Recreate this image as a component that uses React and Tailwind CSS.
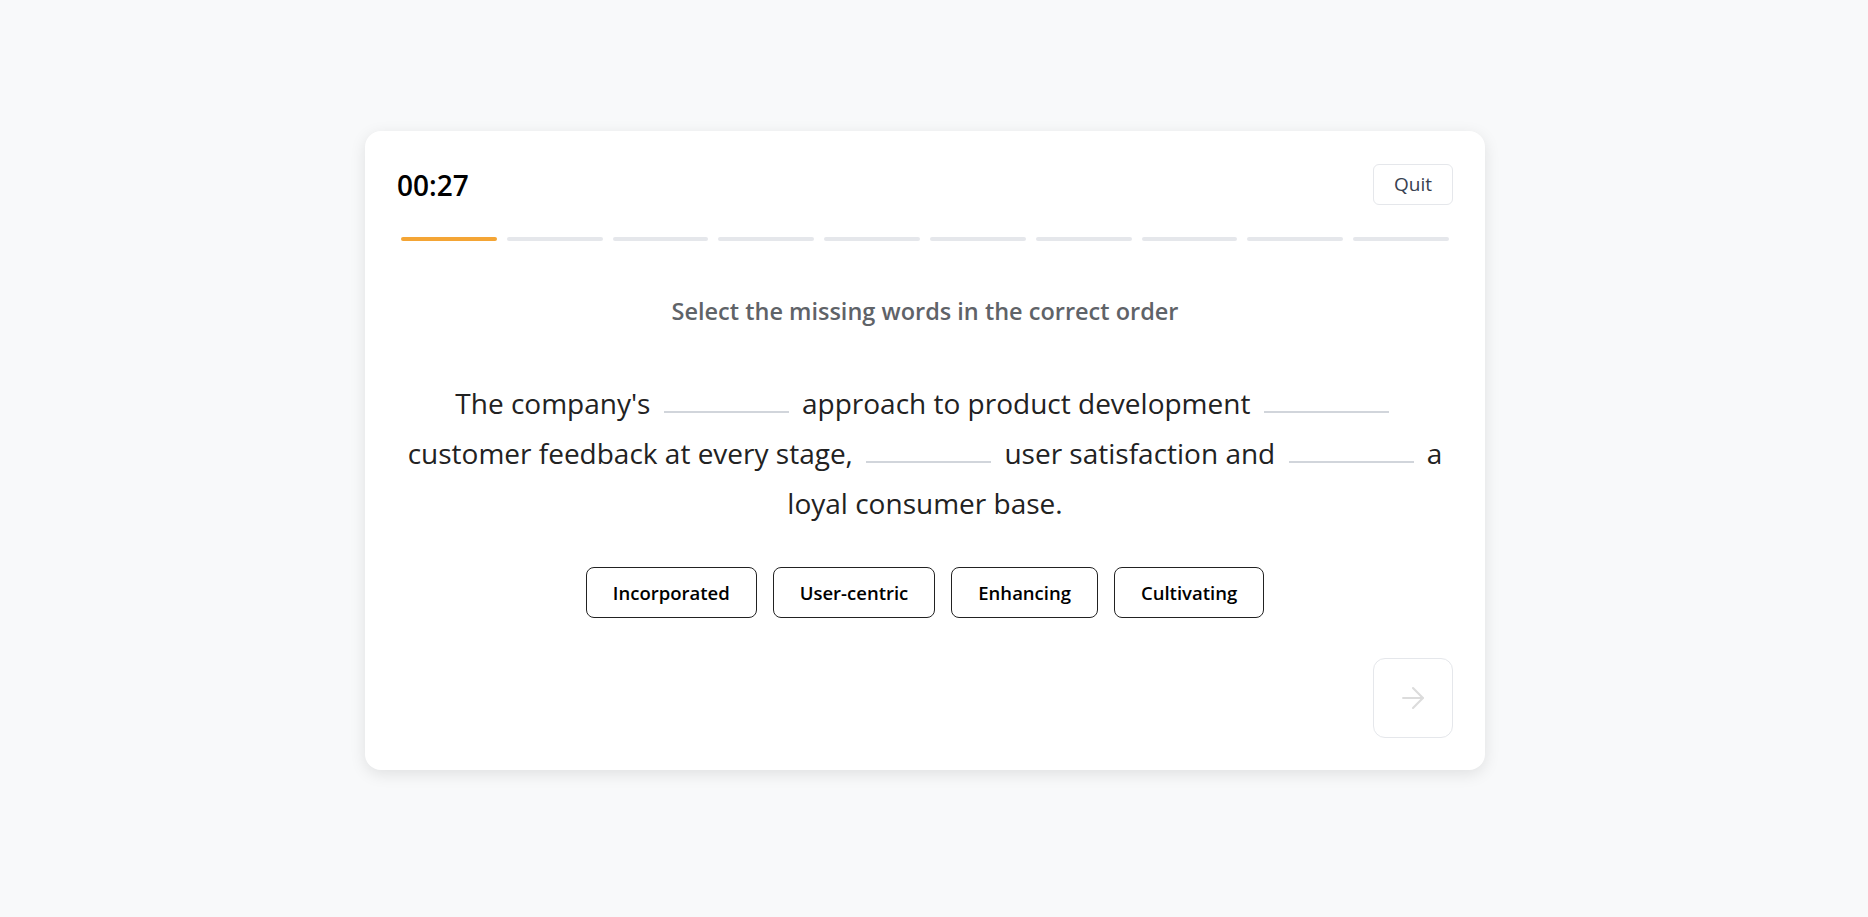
import React from "react";

const Blank = () => (
  <span className="inline-block align-baseline w-[125px] border-b-2 border-[#d1d5db] mx-[6px] translate-y-[-1px]" />
);

export default function App() {
  const bars = Array.from({ length: 10 });
  const words = ["Incorporated", "User-centric", "Enhancing", "Cultivating"];
  return (
    <div
      className="min-h-screen w-full bg-[#f8f9fa] flex items-center justify-center pr-[18px] pb-[16px]"
      style={{ fontFamily: "'Segoe UI', 'Open Sans', 'Noto Sans', sans-serif" }}
    >
      <div className="w-[1120px] bg-white rounded-2xl shadow-[0_4px_16px_rgba(0,0,0,0.1)] px-8 pt-[33px] pb-[32px]">
        <div className="flex items-center justify-between">
          <div className="text-[28px] font-semibold text-black leading-none">00:27</div>
          <button className="h-[41px] px-5 border border-gray-200 rounded-md text-[19px] text-[#374151] bg-white">
            Quit
          </button>
        </div>
        <div className="mt-8 px-1 flex gap-2.5">
          {bars.map((_, i) => (
            <div
              key={i}
              className={
                i === 0
                  ? "h-1 flex-1 rounded-full bg-[#f4a535]"
                  : "h-1 flex-1 rounded-full bg-[#e5e7eb]"
              }
            />
          ))}
        </div>
        <div className="mt-[56px] text-center text-[23.5px] font-semibold text-[#5f6368] leading-[28px]">
          Select the missing words in the correct order
        </div>
        <p className="mt-[53px] text-center text-[28px] leading-[50px] text-[#222222]">
          The company's <Blank /> approach to product development <Blank /> customer
          feedback at every stage, <Blank /> user satisfaction and <Blank /> a loyal
          consumer base.
        </p>
        <div className="mt-[39px] flex justify-center gap-4">
          {words.map((w) => (
            <button
              key={w}
              className="h-[51px] px-[26px] border border-[#222] rounded-lg text-[18.5px] font-semibold text-black bg-white"
            >
              {w}
            </button>
          ))}
        </div>
        <div className="mt-10 flex justify-end">
          <button className="w-20 h-20 rounded-xl border border-gray-200 flex items-center justify-center text-[#dcdcdc]">
            <svg width="34" height="34" viewBox="0 0 24 24" fill="none" stroke="currentColor" strokeWidth="1.5" strokeLinecap="round" strokeLinejoin="round">
              <path d="M5 12h14" />
              <path d="m12 5 7 7-7 7" />
            </svg>
          </button>
        </div>
      </div>
    </div>
  );
}
